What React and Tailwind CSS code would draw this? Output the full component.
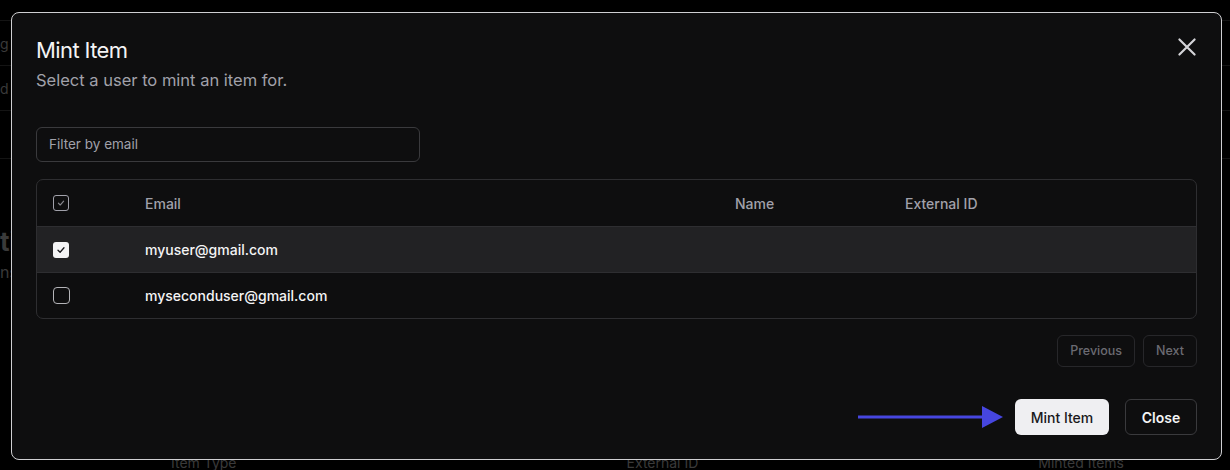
import React from "react";

function CheckIcon({ className }) {
  return (
    <svg viewBox="0 0 16 16" className={className} fill="none" stroke="currentColor" strokeWidth="1.3" strokeLinecap="round" strokeLinejoin="round">
      <path d="M5 8.2 L7.1 10.3 L11 5.8" />
    </svg>
  );
}

function XIcon() {
  return (
    <svg viewBox="0 0 24 24" className="w-[26px] h-[26px] text-[#d4d4d8]" fill="none" stroke="currentColor" strokeWidth="2" strokeLinecap="round">
      <path d="M5 5 L19 19 M19 5 L5 19" />
    </svg>
  );
}

function Row({ checked, email, bg }) {
  return (
    <div className={`flex items-center h-[46px] border-t border-[#2e2e31] ${bg}`}>
      <div className="w-[108px] pl-4 flex items-center">
        {checked ? (
          <div className="w-4 h-4 rounded-[3px] bg-[#f4f4f5] flex items-center justify-center text-[#18181b]">
            <CheckIcon className="w-4 h-4" />
          </div>
        ) : (
          <div className="w-[17px] h-[17px] rounded-[4px] border-[1.5px] border-[#b4b4b8]" />
        )}
      </div>
      <div className="text-[14px] font-medium text-[#f4f4f5]">{email}</div>
    </div>
  );
}

export default function App() {
  return (
    <div className="relative w-[1230px] h-[470px] bg-black overflow-hidden" style={{ fontFamily: "Inter, 'Noto Sans', sans-serif" }}>
      {/* dim background page */}
      <div className="w-full h-full text-[#2b2b2b] text-[14px]">
        <div className="flex h-[20px] items-end">
          <span className="ml-[486px] -mb-[8px]">Name</span>
          <span className="ml-[370px] -mb-[8px]">External ID</span>
        </div>
        <div className="border-t border-[#141414] h-[45px] flex items-center text-[#3a3a3a]">g</div>
        <div className="border-t border-[#141414] h-[45px] flex items-center text-[#3a3a3a]">d</div>
        <div className="border-t border-[#141414] h-[48px]" />
        <div className="border-t border-[#141414] h-[70px]" />
        <div className="text-[26px] leading-[28px] font-bold text-[#3a3a3a]">ti</div>
        <div className="mt-[6px] text-[16px] leading-[20px] text-[#3a3a3a]">ns</div>
        <div className="flex mt-[170px] text-[#3a3a3a]">
          <span className="ml-[171px]">Item Type</span>
          <span className="ml-[390px]">External ID</span>
          <span className="ml-[340px]">Minted Items</span>
        </div>
      </div>

      {/* modal */}
      <div className="absolute left-[11px] top-[12px] w-[1211px] h-[448px] rounded-[8px] border border-[#cfcfd2] bg-[#0e0e0f] px-6 pt-[22px]">
        <button className="absolute right-[21px] top-[21px]">
          <XIcon />
        </button>
        <div className="text-[22px] leading-[30px] text-[#f4f4f5] tracking-[-0.6px]">Mint Item</div>
        <div className="mt-[3px] text-[16.5px] leading-[24px] text-[#a1a1aa]">Select a user to mint an item for.</div>

        <div className="mt-[35px] w-[384px] h-[35px] rounded-[6px] border border-[#3a3a3d] flex items-center px-3 text-[13.5px] text-[#a1a1aa]">
          Filter by email
        </div>

        <div className="mt-[17px] rounded-[7px] border border-[#2e2e31] overflow-hidden">
          <div className="flex items-center h-[46px] text-[14px] font-medium text-[#a1a1aa]">
            <div className="w-[108px] pl-4 flex items-center">
              <div className="w-4 h-4 rounded-[3px] border border-[#a1a1aa] flex items-center justify-center text-[#8a8a90]">
                <CheckIcon className="w-[14px] h-[14px]" />
              </div>
            </div>
            <div className="w-[590px]">Email</div>
            <div className="w-[170px]">Name</div>
            <div>External ID</div>
          </div>
          <Row checked email="myuser@gmail.com" bg="bg-[#222224]" />
          <Row email="myseconduser@gmail.com" bg="" />
        </div>

        <div className="mt-[16px] flex justify-end gap-2">
          <button className="h-[32px] px-3 rounded-[6px] border border-[#27272a] text-[12.5px] font-medium text-[#6b6b72]">Previous</button>
          <button className="h-[32px] px-3 rounded-[6px] border border-[#27272a] text-[12.5px] font-medium text-[#6b6b72]">Next</button>
        </div>

        <div className="mt-[32px] flex justify-end items-center">
          <svg width="146" height="24" viewBox="0 0 146 24" className="mr-[11px]">
            <line x1="0" y1="12" x2="126" y2="12" stroke="#4646e0" strokeWidth="3" />
            <path d="M124 1 L145 12 L124 23 Z" fill="#4646e0" />
          </svg>
          <button className="h-[36px] w-[94px] rounded-[6px] bg-[#efeff2] text-[14px] font-medium text-[#18181b]">Mint Item</button>
          <button className="ml-4 h-[36px] w-[72px] rounded-[6px] border border-[#3a3a3d] text-[14px] font-semibold text-[#f4f4f5]">Close</button>
        </div>
      </div>
    </div>
  );
}
